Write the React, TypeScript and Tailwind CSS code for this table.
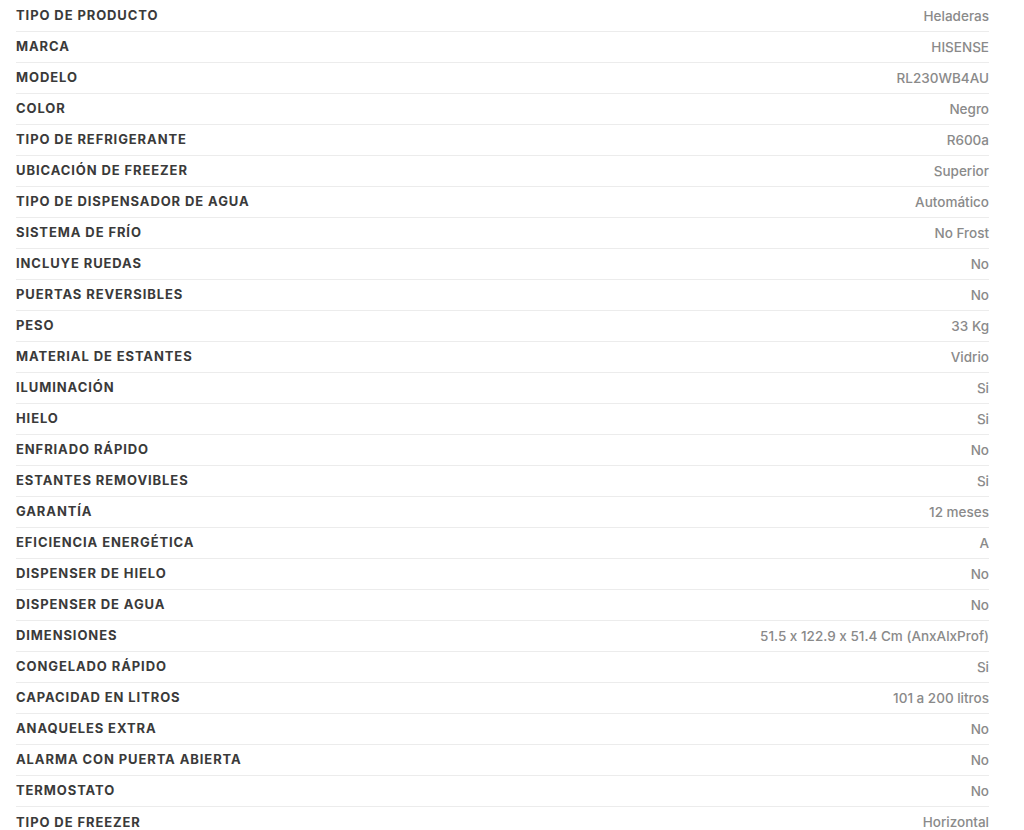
const specs: [string, string][] = [
  ["TIPO DE PRODUCTO", "Heladeras"],
  ["MARCA", "HISENSE"],
  ["MODELO", "RL230WB4AU"],
  ["COLOR", "Negro"],
  ["TIPO DE REFRIGERANTE", "R600a"],
  ["UBICACIÓN DE FREEZER", "Superior"],
  ["TIPO DE DISPENSADOR DE AGUA", "Automático"],
  ["SISTEMA DE FRÍO", "No Frost"],
  ["INCLUYE RUEDAS", "No"],
  ["PUERTAS REVERSIBLES", "No"],
  ["PESO", "33 Kg"],
  ["MATERIAL DE ESTANTES", "Vidrio"],
  ["ILUMINACIÓN", "Si"],
  ["HIELO", "Si"],
  ["ENFRIADO RÁPIDO", "No"],
  ["ESTANTES REMOVIBLES", "Si"],
  ["GARANTÍA", "12 meses"],
  ["EFICIENCIA ENERGÉTICA", "A"],
  ["DISPENSER DE HIELO", "No"],
  ["DISPENSER DE AGUA", "No"],
  ["DIMENSIONES", "51.5 x 122.9 x 51.4 Cm (AnxAlxProf)"],
  ["CONGELADO RÁPIDO", "Si"],
  ["CAPACIDAD EN LITROS", "101 a 200 litros"],
  ["ANAQUELES EXTRA", "No"],
  ["ALARMA CON PUERTA ABIERTA", "No"],
  ["TERMOSTATO", "No"],
  ["TIPO DE FREEZER", "Horizontal"],
];

export default function App() {
  return (
    <div className="bg-white min-h-screen pl-4 pr-[35px] font-['Inter',sans-serif] [font-feature-settings:'calt'_0]">
      <table className="w-full border-collapse">
        <tbody>
          {specs.map(([label, value], i) => (
            <tr key={label} className={i < specs.length - 1 ? "border-b border-[#ececec]" : ""}>
              <td className="h-[31px] p-0 pt-px text-[13px] font-bold tracking-[0.9px] text-[#3a3a3a]">
                {label}
              </td>
              <td className="h-[31px] p-0 pt-px text-right text-[13.5px] font-medium text-[#8a8a8a]">
                {value}
              </td>
            </tr>
          ))}
        </tbody>
      </table>
    </div>
  );
}
